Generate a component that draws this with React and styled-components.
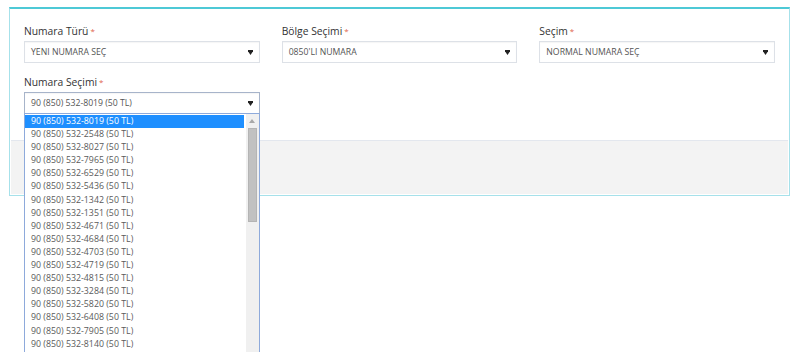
import React from 'react';
import styled, { createGlobalStyle } from 'styled-components';

const GlobalStyle = createGlobalStyle`
	html, body {
		margin: 0;
		padding: 0;
		background: #fff;
		font-family: "Open Sans", "Liberation Sans", sans-serif;
	}
`;

const Page = styled.div`
	height: 352px;
	overflow: hidden;
	padding-top: 7px;
	box-sizing: border-box;
`;

const Panel = styled.div`
	margin: 0 10px 0 9px;
	border: 1px solid #a6e1ea;
	border-top: 2px solid #4ec9d6;
	background: #fff;
`;

const Form = styled.div`
	display: grid;
	grid-template-columns: repeat(3, 1fr);
	column-gap: 22px;
	row-gap: 11px;
	padding: 14px 14px 26px 14px;
`;

const Field = styled.div`
	position: relative;
`;

const Label = styled.div`
	font-size: 10.3px;
	line-height: 16px;
	color: #333;
	margin-bottom: 2px;

	span {
		color: #e0644a;
		font-size: 8px;
		margin-left: 2px;
		vertical-align: 1px;
	}
`;

const SelectBox = styled.div`
	height: 22px;
	box-sizing: border-box;
	border: 1px solid ${({ $focused }) => ($focused ? '#a7b4ca' : '#dde1e7')};
	box-shadow: inset 0 1px 1px rgba(0, 0, 0, 0.04);
	display: flex;
	align-items: center;
	justify-content: space-between;
	padding: 0 6px 0 6px;
	font-size: 8.7px;
	color: #555;
	text-transform: ${({ $plain }) => ($plain ? 'none' : 'uppercase')};
	background: #fff;
`;

const Arrow = () => (
	<svg width="5" height="5" viewBox="0 0 5 5">
		<path d="M0 0h5v1.2L2.5 5 0 1.2z" fill="#222" />
	</svg>
);

const DropList = styled.div`
	position: absolute;
	top: 100%;
	left: 0;
	right: 0;
	margin-top: -1px;
	height: 260px;
	overflow: hidden;
	box-sizing: border-box;
	border: 1px solid #8eaadb;
	border-bottom: none;
	background: #fff;
	display: flex;
	z-index: 5;
`;

const Options = styled.div`
	flex: 1;
	padding-top: 1px;
`;

const Option = styled.div`
	height: 13.1px;
	line-height: 13px;
	padding-left: 6px;
	font-size: 8.8px;
	white-space: nowrap;
	color: ${({ $selected }) => ($selected ? '#fff' : '#5a5a5a')};
	background: ${({ $selected }) => ($selected ? '#1e8fff' : 'transparent')};
	margin-right: 2px;
`;

const ScrollTrack = styled.div`
	width: 11px;
	background: #f0f0f0;
	display: flex;
	flex-direction: column;
	align-items: center;
	padding: 2px 1px 0;
`;

const ScrollUp = styled.div`
	width: 10px;
	height: 10px;
	display: flex;
	align-items: center;
	justify-content: center;
	background: #f0f0f0;
`;

const Thumb = styled.div`
	width: 9px;
	height: 94px;
	margin-top: 2px;
	background: #c1c1c1;
	border: 1px solid #b4b4b4;
	box-sizing: border-box;
`;

const Footer = styled.div`
	height: 53px;
	margin: 0 1px 1px;
	background: #f3f3f3;
	border-top: 1px solid #e3e7ee;
`;

const numbers = [
	'8019', '2548', '8027', '7965', '6529', '5436', '1342', '1351', '4671',
	'4684', '4703', '4719', '4815', '3284', '5820', '6408', '7905', '8140',
];

const Select = ({ value, focused, plain }) => (
	<SelectBox $focused={focused} $plain={plain}>
		<span>{value}</span>
		<Arrow />
	</SelectBox>
);

export default function App() {
	return (
		<Page>
			<GlobalStyle />
			<Panel>
				<Form>
					<Field>
						<Label>Numara Türü<span>*</span></Label>
						<Select value="Yeni Numara Seç" />
					</Field>
					<Field>
						<Label>Bölge Seçimi<span>*</span></Label>
						<Select value="0850'li Numara" />
					</Field>
					<Field>
						<Label>Seçim<span>*</span></Label>
						<Select value="Normal Numara Seç" />
					</Field>
					<Field>
						<Label>Numara Seçimi<span>*</span></Label>
						<Select value="90 (850) 532-8019 (50 TL)" focused plain />
						<DropList>
							<Options>
								{numbers.map((n, i) => (
									<Option key={n} $selected={i === 0}>
										90 (850) 532-{n} (50 TL)
									</Option>
								))}
							</Options>
							<ScrollTrack>
								<ScrollUp>
									<svg width="6" height="4" viewBox="0 0 6 4">
										<path d="M3 0L6 4H0z" fill="#a8a8a8" />
									</svg>
								</ScrollUp>
								<Thumb />
							</ScrollTrack>
						</DropList>
					</Field>
				</Form>
				<Footer />
			</Panel>
		</Page>
	);
}
